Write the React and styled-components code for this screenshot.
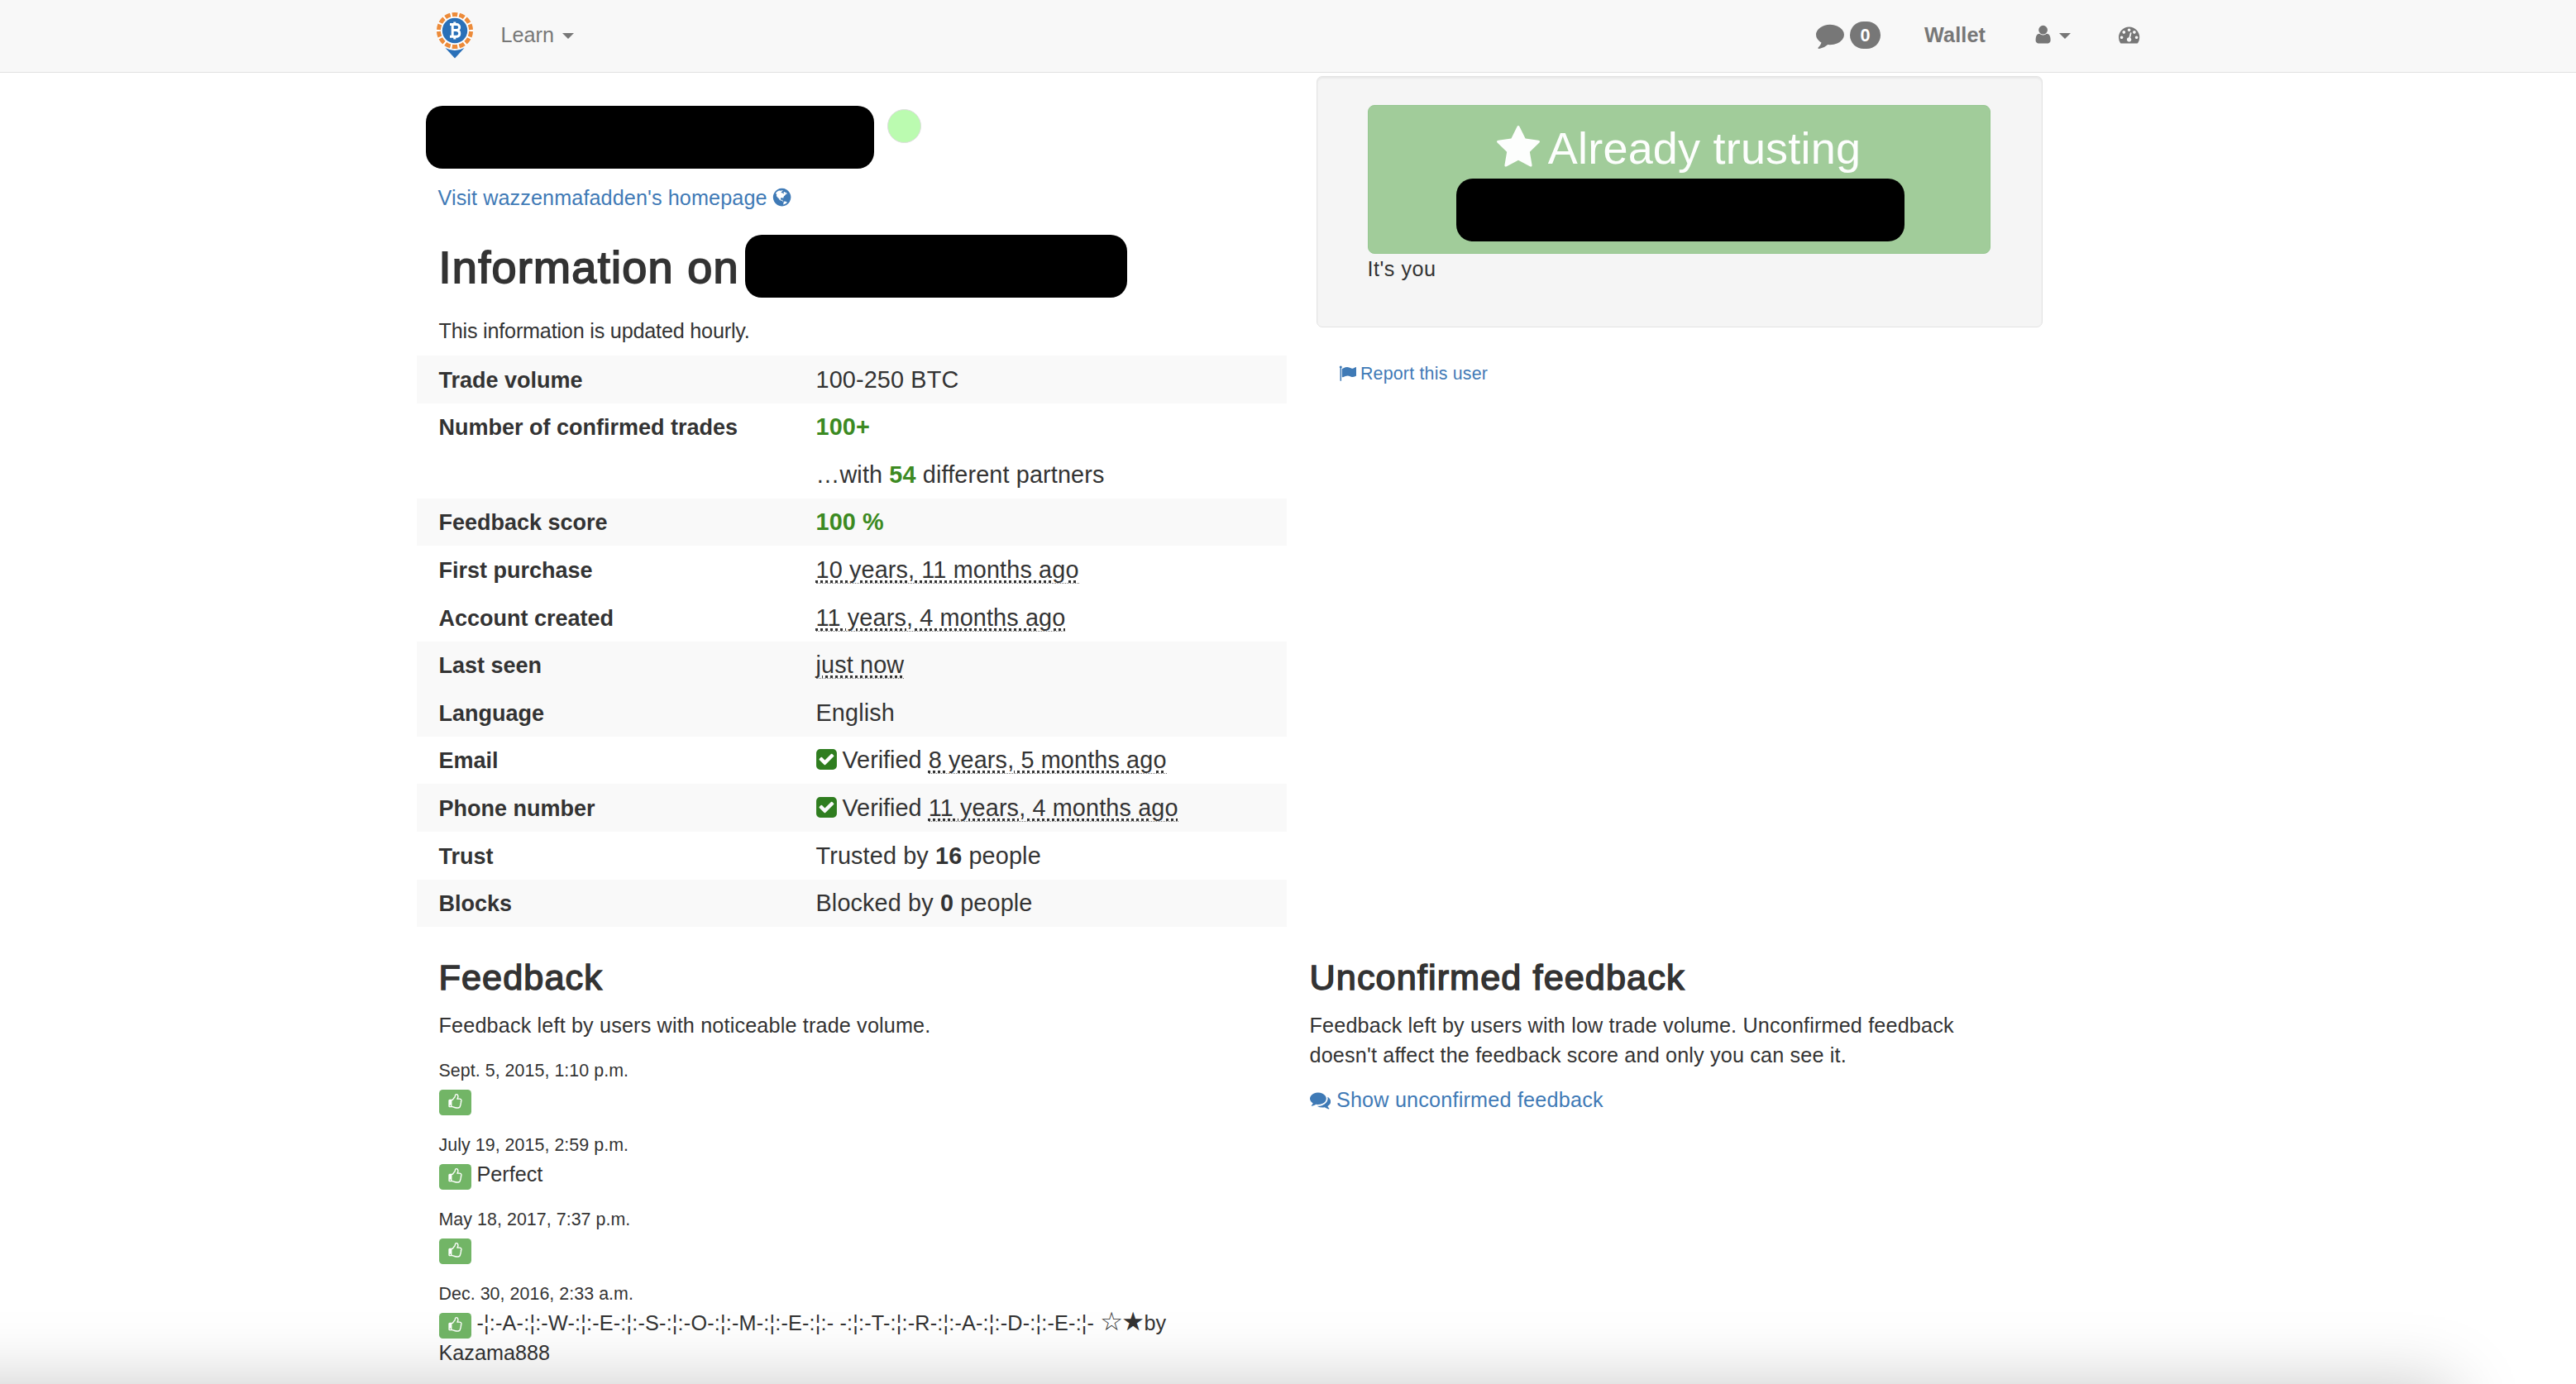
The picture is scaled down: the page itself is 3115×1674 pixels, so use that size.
import React from "react";
import styled, { createGlobalStyle } from "styled-components";

// 1792 x 1792 icon outlines
const ICONS = {
  comment:
    "M1792 896q0 174-120 321.5t-326 233-450 85.5q-70 0-145-8-198 175-460 242-49 14-114 22-17 2-30.5-9t-17.5-29v-1q-3-4-.5-12t2-10 4.5-9.5l6-9 7-8.5 8-9q7-8 31-34.5t34.5-38 31-39.5 32.5-51 27-59 26-76q-157-89-247.5-220t-90.5-281q0-130 71-248.5t191-204.5 286-136.5 348-50.5q244 0 450 85.5t326 233 120 321.5z",
  user:
    "M1536 1399q0 109-62.5 187t-150.5 78h-854q-88 0-150.5-78t-62.5-187q0-85 8.5-160.5t31.5-152 58.5-131 94-89 134.5-34.5q131 128 313 128t313-128q76 0 134.5 34.5t94 89 58.5 131 31.5 152 8.5 160.5zm-256-887q0 159-112.5 271.5t-271.5 112.5-271.5-112.5-112.5-271.5 112.5-271.5 271.5-112.5 271.5 112.5 112.5 271.5z",
  dashboard:
    "M384 1152q0-53-37.5-90.5t-90.5-37.5-90.5 37.5-37.5 90.5 37.5 90.5 90.5 37.5 90.5-37.5 37.5-90.5zm192-448q0-53-37.5-90.5t-90.5-37.5-90.5 37.5-37.5 90.5 37.5 90.5 90.5 37.5 90.5-37.5 37.5-90.5zm428 481l101-382q6-26-7.5-48.5t-38.5-29.5-48 6.5-30 39.5l-101 382q-60 5-107 43.5t-63 98.5q-20 77 20 146t117 89 146-20 89-117q16-60-6-117t-72-91zm660-33q0-53-37.5-90.5t-90.5-37.5-90.5 37.5-37.5 90.5 37.5 90.5 90.5 37.5 90.5-37.5 37.5-90.5zm-640-640q0-53-37.5-90.5t-90.5-37.5-90.5 37.5-37.5 90.5 37.5 90.5 90.5 37.5 90.5-37.5 37.5-90.5zm448 192q0-53-37.5-90.5t-90.5-37.5-90.5 37.5-37.5 90.5 37.5 90.5 90.5 37.5 90.5-37.5 37.5-90.5zm320 448q0 261-141 483-19 29-54 29h-1402q-35 0-54-29-141-221-141-483 0-182 71-348t191-286 286-191 348-71 348 71 286 191 191 286 71 348z",
  globe:
    "M896 128q209 0 385.5 103t279.5 279.5 103 385.5-103 385.5-279.5 279.5-385.5 103-385.5-103-279.5-279.5-103-385.5 103-385.5 279.5-279.5 385.5-103zm274 521q-2 1-9.5 9.5t-13.5 9.5q2 0 4.5-5t5-11 3.5-7q6-7 22-15 14-6 52-12 34-8 51 11-2-2 9.5-13t14.5-12q3-2 15-4.5t15-7.5l2-22q-12 1-17.5-7t-6.5-21q0 2-6 8 0-7-4.5-8t-11.5 1-9 1q-10-3-15-7.5t-8-16.5-4-15q-2-5-9.5-11t-9.5-10q-1-2-2.5-5.5t-3-6.5-4-5.5-5.5-2.5-7 5-7.5 10-4.5 5q-3-2-6-1.5t-4.5 1-4.5 3-5 3.5q-3 2-8.5 3t-8.5 2q15-5-1-11-10-4-16-3 9-4 7.5-12t-8.5-14h5q-1-4-8.5-8.5t-17.5-8.5-13-6q-8-5-34-9.5t-33-.5q-5 6-4.5 10.5t4 14 3.5 12.5q1 6-5.5 13t-6.5 12q0 7 14 15.5t10 21.5q-3 8-16 16t-16 12q-5 8-1.5 18.5t10.5 16.5q2 2 1.5 4t-3.5 4.5-5.5 4-6.5 3.5l-3 2q-11 5-20.5-6t-13.5-26q-7-25-16-30-23-8-29 1-5-13-41-26-25-9-58-4 6-1 0-15-7-15-19-12 3-6 4-17.5t1-13.5q3-13 12-23 1-1 7-8.5t9.5-13.5.5-6q35 4 50-11 5-5 11.5-17t10.5-17q9-6 14-5.5t14.5 5.5 14.5 5q14 1 15.5-11t-7.5-20q12 1 3-17-4-7-8-9-12-4-27 5-8 4 2 8-1-1-9.5 10.5t-16.5 17.5-16-5q-1-1-5.5-13.5t-9.5-13.5q-8 0-16 15 3-8-11-15t-24-8q19-12-8-27-7-4-20.5-5t-19.5 4q-5 7-5.5 11.5t5 8 10.5 5.5 11.5 4 8.5 3q14 10 8 14-2 1-8.5 3.5t-11.5 4.5-6 4q-3 4 0 14t-2 14q-5-5-9-17.5t-7-16.5q7 9-25 6l-10-1q-4 0-16 2t-20.5 1-13.5-8q-4-8 0-20 1-4 4-2-4-3-11-9.5t-10-8.5q-46 15-94 41 6 1 12-1 5-2 13-6.5t10-5.5q34-14 42-7l5-5q14 16 20 25-7-4-30-1-20 6-22 12 7 12 5 18-4-3-11.5-10t-14.5-11-15-5q-16 0-22 1-146 80-235 222 7 7 12 8 4 1 5 9t2.5 11 11.5-3q9 8 3 19 1-1 44 27 19 17 21 21 3 11-10 18-1-2-9-9t-9-4q-3 5 .5 18.5t10.5 12.5q-7 0-9.5 16t-2.5 35.5-1 23.5l2 1q-3 12 5.5 34.5t21.5 19.5q-13 3 20 43 6 8 8 9 3 2 12 7.5t15 10 10 10.5q4 5 10 22.5t14 23.5q-2 6 9.5 20t10.5 23q-1 0-2.5 1t-2.5 1q3 7 15.5 14t15.5 13q1 3 2 10t3 11 8 2q2-20-24-62-15-25-17-29-3-5-5.5-15.5t-4.5-14.5q2 0 6 1.5t8.5 3.5 7.5 4 2 3q-3 7 2 17.5t12 18.5 17 19 12 13q6 6 14 19.5t0 13.5q9 0 20 10.5t17 19.5q5 8 8 26t5 24q2 7 8.5 13.5t12.5 9.5l16 8 13 7q5 2 18.5 10.5t21.5 11.5q10 4 16 4t14.5-2.5 13.5-3.5q15-2 29 15t21 21q36 19 55 11-2 1 .5 7.5t8 15.5 9 14.5 5.5 8.5q5 6 18 15t18 15q6-4 7-9-3 8 7 20t18 10q14-3 14-32-31 15-49-18 0-1-2.5-5.5t-4-8.5-2.5-8.5 0-7.5 5-3q9 0 10-3.5t-2-12.5-4-13q-1-8-11-20t-12-15q-5 9-16 8t-16-9q0 1-1.5 5.5t-1.5 6.5q-13 0-15-1 1-3 2.5-17.5t3.5-22.5q1-4 5.5-12t7.5-14.5 4-12.5-4.5-9.5-17.5-2.5q-19 1-26 20-1 3-3 10.5t-5 11.5-9 7q-7 3-24 2t-24-5q-13-8-22.5-29t-9.5-37q0-10 2.5-26.5t3-25-5.5-24.5q3-2 9-9.5t10-10.5q2-1 4.5-1.5t4.5 0 4-1.5 3-6q-1-1-4-3-3-3-4-3 7 3 28.5-1.5t27.5 1.5q15 11 22-2 0-1-2.5-9.5t-.5-13.5q5 27 29 9 3 3 15.5 5t17.5 5q3 2 7 5.5t5.5 4.5 5-.5 8.5-6.5q10 14 12 24 11 40 19 44 7 3 11 2t4.5-9.5 0-14-1.5-12.5l-1-8v-18l-1-8q-15-3-18.5-12t1.5-18.5 15-18.5q1-1 8-3.5t15.5-6.5 12.5-8q21-19 15-35 7 0 11-9-1 0-5-3t-7.5-5-4.5-2q9-5 2-16 5-3 7.5-11t7.5-10q9 12 21 2 8-8 1-16 5-7 20.5-10.5t18.5-9.5q7 2 8-2t1-12 3-12q4-5 15-9t13-5l17-11q3-4 0-4 18 2 31-11 10-11-6-20 3-6-3-9.5t-15-5.5q3-1 11.5-.5t10.5-1.5q15-10-7-16-17-5-43 12zm-163 877q206-36 351-189-3-3-12.5-4.5t-12.5-3.5q-18-7-24-8 1-7-2.5-13t-8-9-12.5-8-11-7q-2-2-7-6t-7-5.5-7.5-4.5-8.5-2-10 1l-3 1q-3 1-5.5 2.5t-5.5 3-4 3 0 2.5q-21-17-36-22-5-1-11-5.5t-10.5-7-10-1.5-11.5 7q-5 5-6 15t-2 13q-7-5 0-17.5t2-18.5q-3-6-10.5-4.5t-12 4.5-11.5 8.5-9 6.5-8.5 5.5-8.5 7.5q-3 4-6 12t-5 11q-2-4-11.5-6.5t-9.5-5.5q2 10 4 35t5 38q7 31-12 48-27 25-29 40-4 22 12 26 0 7-8 20.5t-7 21.5q0 6 2 16z",
  star:
    "M1728 647q0 22-26 48l-363 354 86 500q1 7 1 20 0 21-10.5 35.5t-30.5 14.5q-19 0-40-12l-449-236-449 236q-22 12-40 12-21 0-31.5-14.5t-10.5-35.5q0-6 2-20l86-500-364-354q-25-27-25-48 0-37 56-46l502-73 225-455q19-41 49-41t49 41l225 455 502 73q56 9 56 46z",
  flag:
    "M320 256q0 72-64 110v1266q0 13-9.5 22.5t-22.5 9.5h-64q-13 0-22.5-9.5t-9.5-22.5v-1266q-64-38-64-110 0-53 37.5-90.5t90.5-37.5 90.5 37.5 37.5 90.5zm1472 64v763q0 25-12.5 38.5t-39.5 27.5q-215 116-369 116-61 0-123.5-22t-108.5-48-115.5-48-142.5-22q-192 0-464 146-17 9-33 9-26 0-45-19t-19-45v-742q0-32 31-55 21-14 79-43 236-120 421-120 107 0 200 29t219 88q38 19 88 19 54 0 117.5-21t110-47 88-47 54.5-21q26 0 45 19t19 45z",
  check:
    "M813 1299l614-614q19-19 19-45t-19-45l-102-102q-19-19-45-19t-45 19l-467 467-211-211q-19-19-45-19t-45 19l-102 102q-19 19-19 45t19 45l358 358q19 19 45 19t45-19zm851-883v960q0 119-84.5 203.5t-203.5 84.5h-960q-119 0-203.5-84.5t-84.5-203.5v-960q0-119 84.5-203.5t203.5-84.5h960q119 0 203.5 84.5t84.5 203.5z",
  thumb:
    "M384 1344q0-26-19-45t-45-19-45 19-19 45 19 45 45 19 45-19 19-45zm1152-576q0-51-39-89.5t-89-38.5h-352q0-58 48-159.5t48-160.5q0-98-32-145t-128-47q-26 26-38 85t-30.5 125.5-59.5 109.5q-22 23-77 91-4 5-23 30t-31.5 41-34.5 42.5-40 44-38.5 35.5-40 27-35.5 9h-32v640h32q13 0 31.5 3t33 6.5 38 11 35 11.5 35.5 12.5 29 10.5q211 73 342 73h121q192 0 192-167 0-26-5-56 30-16 47.5-52.5t17.5-73.5-18-69q53-50 53-119 0-25-10-55.5t-25-47.5q32-1 53.5-47t21.5-81zm128-1q0 89-49 163 9 33 9 69 0 77-38 144 3 21 3 43 0 101-60 178 1 139-85 219.5t-227 80.5h-129q-96 0-189.5-22.5t-216.5-65.5q-116-40-138-40h-288q-53 0-90.5-37.5t-37.5-90.5v-640q0-53 37.5-90.5t90.5-37.5h274q36-24 137-155 58-75 107-128 24-25 35.5-85.5t30.5-126.5 62-108q39-37 90-37 84 0 151 32.5t102 101.5 35 186q0 93-48 192h176q104 0 180 76t76 179z",
  comments:
    "M1408 768q0 139-94 257t-256.5 186.5-353.5 68.5q-86 0-176-16-124 88-278 128-36 9-86 16h-3q-11 0-20.5-8t-11.5-21q-1-3-1-6.5t.5-6.5 2-6l2.5-5 3.5-5.5 4-5 4.5-5 4-4.5q5-6 23-25t26-29.5 22.5-29 25-38.5 20.5-44q-124-72-195-177t-71-224q0-139 94-257t256.5-186.5 353.5-68.5 353.5 68.5 256.5 186.5 94 257zm384 256q0 120-71 224.5t-195 176.5q10 24 20.5 44t25 38.5 22.5 29 26 29.5 23 25q1 1 4 4.5t4.5 5 4 5 3.5 5.5l2.5 5 2 6 .5 6.5-1 6.5q-3 14-13 22t-22 7q-50-7-86-16-154-40-278-128-90 16-176 16-271 0-472-132 58 4 88 4 161 0 309-45t264-129q125-92 192-212t67-254q0-77-23-152 129 71 204 178t75 230z",
};

const INFO = [
  { label: "Trade volume", value: "100-250 BTC", shaded: true },
  { label: "Number of confirmed trades", value: <Good>100+</Good> },
  { label: "", value: <>…with <Good>54</Good> different partners</> },
  { label: "Feedback score", value: <Good>100 %</Good>, shaded: true },
  { label: "First purchase", value: <Ago>10 years, 11 months ago</Ago> },
  { label: "Account created", value: <Ago>11 years, 4 months ago</Ago> },
  { label: "Last seen", value: <Ago>just now</Ago>, shaded: true },
  { label: "Language", value: "English", shaded: true },
  { label: "Email", value: <Verified>8 years, 5 months ago</Verified> },
  { label: "Phone number", value: <Verified>11 years, 4 months ago</Verified>, shaded: true },
  { label: "Trust", value: <>Trusted by <b>16</b> people</> },
  { label: "Blocks", value: <>Blocked by <b>0</b> people</>, shaded: true },
];

const FEEDBACK = [
  { date: "Sept. 5, 2015, 1:10 p.m.", text: "" },
  { date: "July 19, 2015, 2:59 p.m.", text: "Perfect" },
  { date: "May 18, 2017, 7:37 p.m.", text: "" },
  {
    date: "Dec. 30, 2016, 2:33 a.m.",
    text: (
      <>
        <Spaced>
          -¦:-A-:¦:-W-:¦:-E-:¦:-S-:¦:-O-:¦:-M-:¦:-E-:¦:- -:¦:-T-:¦:-R-:¦:-A-:¦:-D-:¦:-E-:¦-
        </Spaced>{" "}
        <Stars>☆★</Stars>
        <span>by</span> <span>Kazama888</span>
      </>
    ),
  },
];

function Icon({ name, ...rest }) {
  return (
    <IconSvg viewBox="0 0 1792 1792" aria-hidden="true" {...rest}>
      <path d={ICONS[name]} />
    </IconSvg>
  );
}

function Good({ children }) {
  return <GoodText>{children}</GoodText>;
}

function Ago({ children }) {
  return <AgoText>{children}</AgoText>;
}

function Spaced({ children }) {
  return <SpacedText>{children}</SpacedText>;
}

function Stars({ children }) {
  return <StarsText>{children}</StarsText>;
}

function Verified({ children }) {
  return (
    <>
      <Icon name="check" $size={29} $color="#2f7d1f" $drop={-4} $pull={-2} />
      <VerifiedText>Verified</VerifiedText> <AgoText>{children}</AgoText>
    </>
  );
}

function Logo() {
  return (
    <LogoSvg viewBox="0 0 46 58">
      <path d="M11.5 44 Q23 50 34.5 44 L23 56.5 Z" fill="#2a70b8" />
      <circle cx="23" cy="23" r="22.5" fill="#fff" />
      <circle
        cx="23"
        cy="23"
        r="19.6"
        fill="none"
        stroke="#ec8b3a"
        strokeWidth="5"
        pathLength="140"
        strokeDasharray="7.6 2.4"
        strokeDashoffset="3.8"
        transform="rotate(-90 23 23)"
      />
      <circle cx="23" cy="23" r="15.2" fill="#2a70b8" />
      <path
        d="M17 15.6h8.2a3.4 3.4 0 0 1 0 6.9h-5M25 22.8h.8a3.8 3.8 0 0 1 0 7.4H17M20.2 15.5v15M22.8 12.4v3M22.8 30.4v3"
        fill="none"
        stroke="#fff"
        strokeWidth="3"
      />
    </LogoSvg>
  );
}

const App = () => {
  return (
    <Page>
      <GlobalStyle />
      <Navbar>
        <NavInner>
          <Logo />
          <NavText>Learn</NavText>
          <Caret />
          <NavRight>
            <Icon name="comment" $size={34} />
            <Badge>0</Badge>
            <WalletLink>Wallet</WalletLink>
            <Icon name="user" $size={25.2} />
            <Caret $tight />
            <DashboardLink>
              <Icon name="dashboard" $size={25.2} />
            </DashboardLink>
          </NavRight>
        </NavInner>
      </Navbar>

      <Container>
        <Column>
          <UserLine>
            <Redacted $width={542} />
            <OnlineDot />
          </UserLine>
          <HomepageLink>
            Visit wazzenmafadden's homepage <Icon name="globe" $size={25.2} $drop={-3} $pull={-2} />
          </HomepageLink>
          <InfoHeading>
            <span>Information on</span>
            <Redacted $width={462} />
          </InfoHeading>
          <Note>This information is updated hourly.</Note>
          <InfoTable>
            {INFO.map((row, i) => (
              <InfoRow key={i} $shaded={row.shaded}>
                <InfoLabel>{row.label}</InfoLabel>
                <InfoValue>{row.value}</InfoValue>
              </InfoRow>
            ))}
          </InfoTable>
        </Column>

        <Column>
          <Well>
            <TrustButton>
              <TrustTitle>
                <Icon name="star" $size={56} />
                Already trusting
              </TrustTitle>
              <Redacted $width={542} />
            </TrustButton>
            <ItsYou>It's you</ItsYou>
          </Well>
          <ReportLink>
            <Icon name="flag" $size={21.4} />
            Report this user
          </ReportLink>
        </Column>
      </Container>

      <Container>
        <TextColumn>
          <SectionHeading>Feedback</SectionHeading>
          <Paragraph>Feedback left by users with noticeable trade volume.</Paragraph>
          {FEEDBACK.map((item) => (
            <FeedbackItem key={item.date}>
              <FeedbackDate>{item.date}</FeedbackDate>
              <div>
                <ThumbLabel>
                  <Icon name="thumb" $size={19} $color="#fff" />
                </ThumbLabel>{" "}
                {item.text}
              </div>
            </FeedbackItem>
          ))}
        </TextColumn>
        <TextColumn>
          <SectionHeading>Unconfirmed feedback</SectionHeading>
          <Paragraph $narrow>
            Feedback left by users with low trade volume. Unconfirmed feedback doesn't affect the
            feedback score and only you can see it.
          </Paragraph>
          <Link>
            <Icon name="comments" $size={25.2} $drop={-4} /> Show unconfirmed feedback
          </Link>
        </TextColumn>
      </Container>
      <BottomShadow />
    </Page>
  );
};

const GlobalStyle = createGlobalStyle`
  * {
    box-sizing: border-box;
  }
  body {
    margin: 0;
    background: #fff;
    color: #333;
    font-family: "Liberation Sans", "DejaVu Sans", sans-serif;
    font-size: 25.2px;
    line-height: 36px;
  }
  p, h2, h3 {
    margin: 0;
  }
`;

const Page = styled.div`
  position: relative;
  height: 1674px;
  overflow: hidden;
`;

const IconSvg = styled.svg`
  flex: none;
  width: ${({ $size }) => $size}px;
  height: ${({ $size }) => $size}px;
  fill: ${({ $color }) => $color || "currentColor"};
  vertical-align: ${({ $drop }) => $drop || 0}px;
  margin-left: ${({ $pull }) => $pull || 0}px;
`;

const Navbar = styled.nav`
  height: 88px;
  background: #f8f8f8;
  border-bottom: 1px solid #e2e2e2;
  color: #777;
`;

const NavInner = styled.div`
  display: flex;
  align-items: center;
  width: 2106px;
  height: 84px;
  margin: 0 auto;
  padding: 0 23px 0 22px;
`;

const LogoSvg = styled.svg`
  width: 46px;
  height: 58px;
  margin-top: 2px;
`;

const NavText = styled.span`
  margin-left: 33px;
`;

const Caret = styled.span`
  margin-top: 3px;
  margin-left: ${({ $tight }) => ($tight ? 7 : 10)}px;
  border-top: 7px solid #777;
  border-left: 7px solid transparent;
  border-right: 7px solid transparent;
`;

const NavRight = styled.div`
  display: flex;
  align-items: center;
  margin-left: auto;
`;

const Badge = styled.span`
  width: 37px;
  height: 33px;
  margin: 1px 0 0 7px;
  border-radius: 17px;
  background: #777;
  color: #fff;
  font-size: 21.6px;
  font-weight: 700;
  line-height: 33px;
  text-align: center;
`;

const WalletLink = styled.span`
  margin: 0 57px 0 53px;
  font-weight: 700;
  letter-spacing: 0.15px;
`;

const DashboardLink = styled.span`
  display: flex;
  margin-left: 58px;
`;

const Container = styled.div`
  display: flex;
  width: 2108px;
  margin: 0 auto;
`;

const Column = styled.div`
  width: 1053px;
`;

const TextColumn = styled.div`
  width: 1053px;
  padding: 37px 26px 0 27px;
`;

const Redacted = styled.div`
  width: ${({ $width }) => $width}px;
  height: 76px;
  border-radius: 20px;
  background: #000;
`;

const UserLine = styled.div`
  display: flex;
  gap: 16px;
  padding: 40px 0 0 11px;
`;

const OnlineDot = styled.div`
  width: 41px;
  height: 41px;
  margin-top: 4px;
  border: 1px solid #ddd;
  border-radius: 50%;
  background: #bbfbb0;
`;

const Link = styled.div`
  color: #3f7ab6;
  letter-spacing: 0.2px;
`;

const HomepageLink = styled(Link)`
  padding: 17px 0 0 26px;
  letter-spacing: 0.1px;
  white-space: pre;
`;

const InfoHeading = styled.h2`
  display: flex;
  align-items: center;
  margin-top: 27px;
  padding-left: 27px;
  font-size: 54px;
  font-weight: 400;
  letter-spacing: 1.3px;
  -webkit-text-stroke: 1.8px #333;

  span {
    width: 370px;
    padding-top: 2px;
  }
`;

const Note = styled.p`
  padding: 22px 0 0 27px;
  letter-spacing: -0.2px;
`;

const InfoTable = styled.div`
  width: 1052px;
  margin-top: 12px;
`;

const InfoRow = styled.div`
  display: flex;
  align-items: baseline;
  height: 57.6px;
  padding: 10.6px 0 0 27px;
  background: ${({ $shaded }) => ($shaded ? "#f9f9f9" : "#fff")};
`;

const InfoLabel = styled.div`
  width: 456px;
  font-size: 27px;
  font-weight: 700;
`;

const InfoValue = styled.div`
  font-size: 28.8px;
  letter-spacing: 0.14px;
`;

const GoodText = styled.b`
  color: #3c8a22;
`;

const AgoText = styled.span`
  border-bottom: 1px dotted #777;
  text-decoration: underline dotted;
  text-decoration-thickness: 3px;
  text-underline-offset: 3px;
`;

const VerifiedText = styled.span`
  margin-left: 5px;
  letter-spacing: 0;
`;

const Well = styled.div`
  width: 878px;
  height: 304px;
  margin: 4px 0 0 35px;
  padding: 34px 61px;
  border: 1px solid #e3e3e3;
  border-radius: 7px;
  background: #f5f5f5;
  box-shadow: inset 0 2px 2px rgba(0, 0, 0, 0.05);
`;

const TrustButton = styled.div`
  display: flex;
  flex-direction: column;
  align-items: center;
  width: 753px;
  height: 180px;
  padding-left: 3px;
  border: 1px solid #97c791;
  border-radius: 8px;
  background: #a1cc9a;
  color: #fdfefd;
`;

const TrustTitle = styled.div`
  display: flex;
  align-items: center;
  gap: 8px;
  height: 88px;
  margin-left: -5px;
  padding-top: 13px;
  font-size: 54px;
  letter-spacing: 0.2px;
`;

const ItsYou = styled.p`
  letter-spacing: 0.5px;
`;

const ReportLink = styled(Link)`
  display: flex;
  align-items: center;
  gap: 5px;
  padding: 38px 0 0 62px;
  font-size: 21.4px;
`;

const SectionHeading = styled.h3`
  margin-bottom: 16px;
  font-size: 43.2px;
  font-weight: 400;
  line-height: 48px;
  letter-spacing: 1.1px;
  -webkit-text-stroke: 1.5px #333;
`;

const Paragraph = styled.p`
  max-width: ${({ $narrow }) => ($narrow ? "830px" : "none")};
  margin-bottom: 18px;
  letter-spacing: 0.16px;
`;

const FeedbackItem = styled.div`
  max-width: 920px;
  margin-bottom: 18px;
`;

const FeedbackDate = styled.div`
  height: 36px;
  padding-top: 1px;
  font-size: 21.4px;
  letter-spacing: 0.05px;
`;

const ThumbLabel = styled.span`
  display: inline-flex;
  justify-content: center;
  width: 39px;
  height: 31px;
  margin: 6px 0 -6px;
  padding-top: 5px;
  border-radius: 4.5px;
  background: #72b566;
  vertical-align: top;
`;

const SpacedText = styled.span`
  letter-spacing: 0.2px;
`;

const StarsText = styled.span`
  margin-right: 1px;
  font-size: 31px;
  line-height: 1;
  letter-spacing: -1.6px;
`;

// soft shade rising from below the fold
const BottomShadow = styled.div`
  position: absolute;
  top: 1674px;
  left: -150px;
  right: 150px;
  height: 300px;
  box-shadow: 0 0 80px rgba(0, 0, 0, 0.21);
`;

export default App;
